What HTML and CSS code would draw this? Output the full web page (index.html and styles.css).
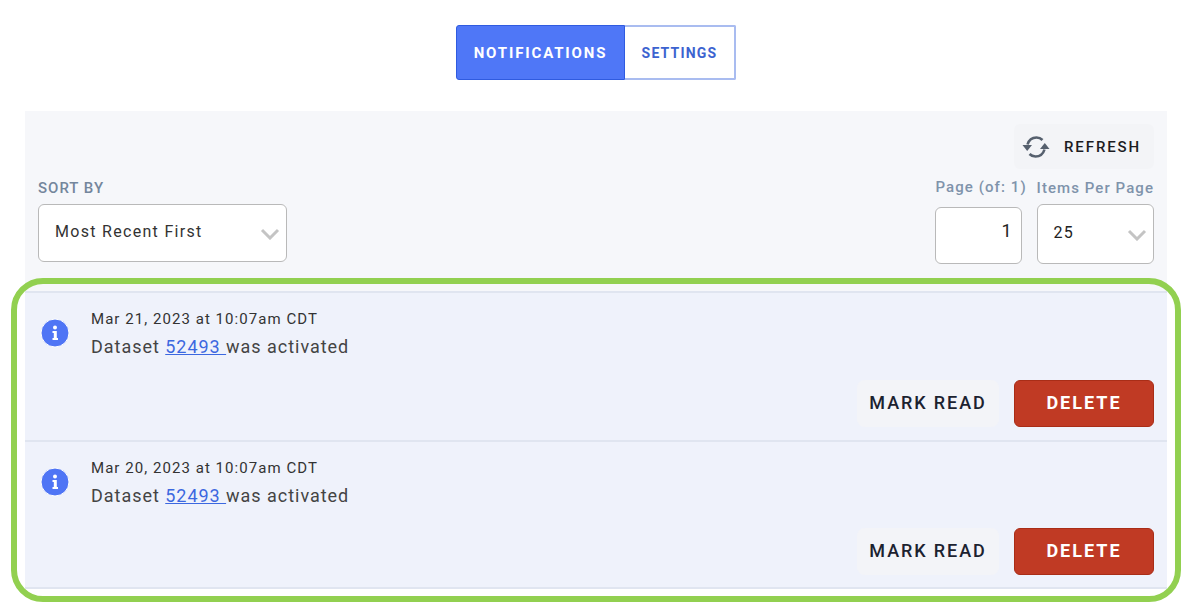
FILE: index.html
```html
<!DOCTYPE html>
<html lang="en">
<head>
    <meta charset="UTF-8">
    <title>Notifications</title>
    <link rel="stylesheet" href="styles.css">
</head>
<body>
    <div class="tabs">
        <button class="tab tab-active">NOTIFICATIONS</button>
        <button class="tab">SETTINGS</button>
    </div>

    <div class="panel">
        <div class="toolbar">
            <div class="refresh-row">
                <button class="refresh-button">
                    <svg class="refresh-icon" viewBox="0 0 28 28" width="28" height="28">
                        <path d="M5.5 11.5 C7 6.5 11 4.5 14.5 4.5 C17 4.5 19 5.5 20.5 7" fill="none" stroke="#56606e" stroke-width="2.6"/>
                        <path d="M22.5 16.5 C21 21.5 17 23.5 13.5 23.5 C11 23.5 9 22.5 7.5 21" fill="none" stroke="#56606e" stroke-width="2.6"/>
                        <path d="M0.5 12 L10 12 L5.2 18 Z" fill="#56606e"/>
                        <path d="M18 16 L27.5 16 L22.8 10 Z" fill="#56606e"/>
                    </svg>
                    <span>REFRESH</span>
                </button>
            </div>
            <div class="filters">
                <div class="field field-sort">
                    <label class="sort-label">SORT BY</label>
                    <div class="select select-sort">
                        <span>Most Recent First</span>
                        <svg class="chevron" viewBox="0 0 20 12" width="20" height="12"><path d="M2 2 L10 10 L18 2" fill="none" stroke="#c4c4c4" stroke-width="3"/></svg>
                    </div>
                </div>
                <div class="paging">
                    <div class="field field-page">
                        <label class="field-label">Page (of: 1)</label>
                        <div class="page-input">1</div>
                    </div>
                    <div class="field field-items">
                        <label class="field-label">Items Per Page</label>
                        <div class="select select-items">
                            <span>25</span>
                            <svg class="chevron" viewBox="0 0 20 12" width="20" height="12"><path d="M2 2 L10 10 L18 2" fill="none" stroke="#c4c4c4" stroke-width="3"/></svg>
                        </div>
                    </div>
                </div>
            </div>
        </div>

        <div class="notification">
            <div class="notification-body">
                <svg class="info-icon" viewBox="0 0 30 30" width="30" height="30">
                    <circle cx="15" cy="15" r="14" fill="#4f75f5" stroke="#ffffff" stroke-width="1"/>
                    <circle cx="15" cy="9.5" r="2" fill="#ffffff"/>
                    <path d="M12.5 13 H16.8 V20 H18 V22 H12.5 V20 H13.8 V15 H12.5 Z" fill="#ffffff"/>
                </svg>
                <div>
                    <div class="notification-date">Mar 21, 2023 at 10:07am CDT</div>
                    <div class="notification-text">Dataset <a href="#">52493 </a>was activated</div>
                </div>
            </div>
            <div class="notification-actions">
                <button class="mark-read">MARK READ</button>
                <button class="delete">DELETE</button>
            </div>
        </div>

        <div class="notification">
            <div class="notification-body">
                <svg class="info-icon" viewBox="0 0 30 30" width="30" height="30">
                    <circle cx="15" cy="15" r="14" fill="#4f75f5" stroke="#ffffff" stroke-width="1"/>
                    <circle cx="15" cy="9.5" r="2" fill="#ffffff"/>
                    <path d="M12.5 13 H16.8 V20 H18 V22 H12.5 V20 H13.8 V15 H12.5 Z" fill="#ffffff"/>
                </svg>
                <div>
                    <div class="notification-date">Mar 20, 2023 at 10:07am CDT</div>
                    <div class="notification-text">Dataset <a href="#">52493 </a>was activated</div>
                </div>
            </div>
            <div class="notification-actions">
                <button class="mark-read">MARK READ</button>
                <button class="delete">DELETE</button>
            </div>
        </div>
    </div>

    <div class="highlight"></div>
</body>
</html>
```

FILE: styles.css
```css
html {
    height: 100%;
    overflow: hidden;
}
body {
    font-family: Roboto, "Liberation Sans", Arial, sans-serif;
    margin: 0;
    padding: 0;
    color: #333;
    background-color: #fff;
    position: relative;
    height: 100%;
    overflow: hidden;
}
button {
    font-family: inherit;
    cursor: pointer;
}
.tabs {
    display: flex;
    justify-content: center;
    padding-top: 25px;
    height: 55px;
}
.tab {
    height: 55px;
    width: 111px;
    padding: 0;
    font-size: 14px;
    font-weight: 700;
    letter-spacing: 1.2px;
    color: #3c63d0;
    background-color: #fff;
    border: 2px solid #a9bcf0;
    border-left: none;
    border-radius: 0 2px 2px 0;
}
.tab-active {
    width: 169px;
    color: #fff;
    background-color: #4f77f7;
    border: 1px solid #2f5be0;
    border-radius: 3px 0 0 3px;
    font-size: 15px;
    letter-spacing: 1.85px;
}
.panel {
    margin: 31px 25px 0;
    background-color: #f6f7fa;
}
.toolbar {
    padding: 13px 13px 0;
    height: 180px;
    box-sizing: border-box;
}
.refresh-row {
    display: flex;
    justify-content: flex-end;
}
.refresh-button {
    display: flex;
    align-items: center;
    gap: 14px;
    width: 140px;
    height: 45px;
    padding: 0 0 0 8px;
    border: none;
    border-radius: 6px;
    background-color: #f3f4f7;
    font-size: 15px;
    font-weight: 500;
    letter-spacing: 1.9px;
    color: #1c1c22;
}
.refresh-icon {
    flex-shrink: 0;
}
.filters {
    display: flex;
    justify-content: space-between;
    align-items: flex-end;
    margin-top: 11px;
}
.field {
    display: flex;
    flex-direction: column;
}
.field-sort {
    margin-bottom: 2px;
}
.field-page {
    width: 87px;
}
.paging {
    display: flex;
    align-items: flex-end;
    gap: 15px;
}
.sort-label {
    font-size: 15px;
    font-weight: 500;
    line-height: 17px;
    letter-spacing: 1px;
    color: #74869c;
    margin-bottom: 7px;
}
.field-label {
    font-size: 15px;
    font-weight: 500;
    line-height: 17px;
    letter-spacing: 1.07px;
    color: #7f93ab;
    white-space: nowrap;
}
.field-page .field-label {
    margin: -1px 0 11px 1px;
}
.field-items .field-label {
    margin-bottom: 7px;
}
.select {
    display: flex;
    justify-content: space-between;
    align-items: center;
    box-sizing: border-box;
    background-color: #fff;
    border: 1px solid #b9b9b9;
    border-radius: 6px;
    font-size: 16px;
    letter-spacing: 1.3px;
    color: #333;
}
.select-sort {
    width: 249px;
    height: 58px;
    padding: 0 6px 4px 16px;
}
.select-items {
    width: 117px;
    height: 60px;
    padding: 0 6px 4px 16px;
    color: #222;
}
.chevron {
    margin-top: 6px;
}
.page-input {
    box-sizing: border-box;
    width: 87px;
    height: 57px;
    padding: 12px 9px 0 0;
    text-align: right;
    background-color: #fff;
    border: 1px solid #b9b9b9;
    border-radius: 6px;
    font-size: 18px;
    color: #222;
}
.notification {
    box-sizing: border-box;
    height: 149px;
    background-color: #eff2fb;
    border-top: 2px solid #e0e5f0;
    display: flex;
    flex-direction: column;
    justify-content: space-between;
}
.notification:last-child {
    border-bottom: 2px solid #e0e5f0;
}
.notification-body {
    display: flex;
    gap: 21px;
    padding: 16px 0 0 15px;
}
.info-icon {
    margin-top: 9px;
    flex-shrink: 0;
}
.notification-date {
    font-size: 15px;
    line-height: 20px;
    letter-spacing: 1.05px;
    color: #333;
}
.notification-text {
    font-size: 18px;
    line-height: 24px;
    margin-top: 6px;
    letter-spacing: 0.97px;
    color: #444;
}
.notification-text a {
    color: #3c68e0;
}
.notification-actions {
    display: flex;
    justify-content: flex-end;
    gap: 15px;
    padding: 0 13px 13px 0;
}
.notification:last-child .notification-actions {
    padding-bottom: 12px;
}
.mark-read {
    width: 142px;
    height: 47px;
    padding: 0 0 2px;
    border: none;
    border-radius: 8px;
    background-color: #f3f4f8;
    font-size: 18px;
    font-weight: 500;
    letter-spacing: 1.9px;
    color: #1c2230;
}
.delete {
    width: 140px;
    height: 47px;
    padding: 0 0 2px;
    border: 1px solid #a92d17;
    border-radius: 6px;
    background-color: #c03a24;
    font-size: 18px;
    font-weight: 700;
    letter-spacing: 2px;
    color: #fff;
}
.highlight {
    position: absolute;
    box-sizing: border-box;
    left: 11px;
    top: 278px;
    width: 1170px;
    height: 324px;
    border: 6px solid #92d050;
    border-radius: 32px;
    pointer-events: none;
}
```
